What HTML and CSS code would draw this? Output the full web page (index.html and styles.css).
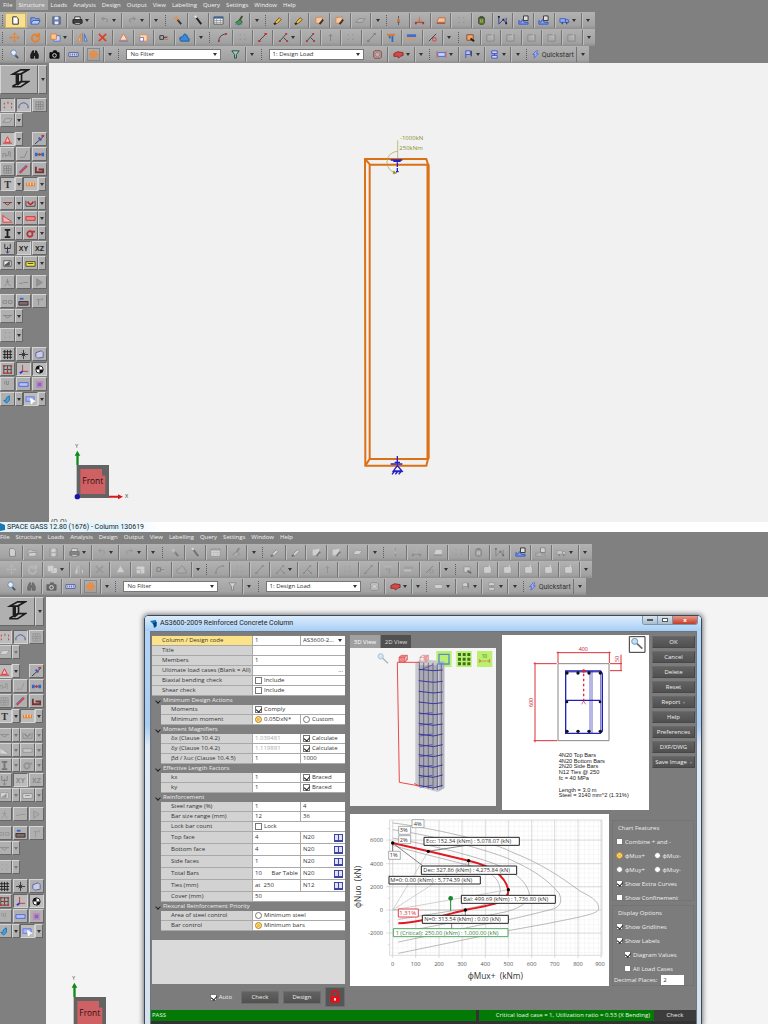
FILE: index.html
```html
<!DOCTYPE html>
<html lang="en">
<head>
<meta charset="utf-8">
<title>SPACE GASS 12.80 (1676) - Column 130619</title>
<link rel="stylesheet" href="styles.css">
</head>
<body>
<section class="app">
  <nav class="menu"><a href="#">File</a><a href="#" class="current">Structure</a><a href="#">Loads</a><a href="#">Analysis</a><a href="#">Design</a><a href="#">Output</a><a href="#">View</a><a href="#">Labelling</a><a href="#">Query</a><a href="#">Settings</a><a href="#">Window</a><a href="#">Help</a></nav>
  <div class="bars"></div>
  <div class="work">
    <aside class="side"></aside>
    <main class="canvas">
      <svg class="scene" width="719" height="459" viewBox="0 0 719 459">
        <svg x="291" y="62" width="120" height="360" viewBox="0 0 360 1080">
          <g fill="none" stroke="#dc7014">
            <path stroke-width="6" d="M75 102H259L265 121V998L259 1022H76ZM90 119H262M89 119V1002H263M75 102l15 17M76 1022l13-20"/>
            <path stroke-width="9" d="M264 118V1002"/>
          </g>
          <g fill="none" stroke="#a5a54a" stroke-width="2"><path d="M173 46V100M173 78Q141 84 141 112Q143 138 166 143"/><path d="M160 138l10 6-10 3z" fill="#7c8400"/></g>
          <g fill="none" stroke="#2321c0" stroke-width="4"><path d="M152 105H187M160 109H182M172 112V126M172 129V140M168 140h8M172 993V1018M152 1017H187M164 1012h16M172 1022L160 1038H186ZM157 1040H188M156 1048l6-7M166 1048l6-7M176 1048l6-7"/></g>
          <text class="load" x="180" y="44">-1000kN</text>
          <text class="load" x="178" y="76">250kNm</text>
        </svg>
        <svg x="18" y="379" width="70" height="60" viewBox="201 21 210 180"><use href="#cube"/></svg>
        <text class="origin" x="2" y="461">(0,0)</text>
      </svg>
    </main>
  </div>
</section>

<section class="app modal">
  <h1 class="caption"><svg width="6" height="8" viewBox="0 0 6 8"><path fill="#1c78b0" d="M0 0l5 2v5l-5 1z"/></svg>SPACE GASS 12.80 (1676) - Column 130619</h1>
  <nav class="menu"><a href="#">File</a><a href="#">Structure</a><a href="#">Loads</a><a href="#">Analysis</a><a href="#">Design</a><a href="#">Output</a><a href="#">View</a><a href="#">Labelling</a><a href="#">Query</a><a href="#">Settings</a><a href="#">Window</a><a href="#">Help</a></nav>
  <div class="bars"></div>
  <div class="work">
    <aside class="side"></aside>
    <main class="canvas">
      <svg class="scene" width="719" height="459" viewBox="0 0 719 459">
        <defs><g id="cube">
          <path fill="#636363" d="M230 90H327V189H230Z"/><path fill="#cf6064" d="M241 102H316V177H241Z"/><path fill="#636363" d="M306 102h12v20h-12z"/>
          <path fill="#128a1a" d="M229 90V62h-5l8-15 9 15h-5V90z"/><path fill="#d81818" d="M327 182h27v-4l15 7-15 8v-5h-27z"/><circle cx="232" cy="185" r="8" fill="#1a12b4"/>
          <text x="247" y="148" font-size="25" fill="#2d1010">Front</text><text x="226" y="40" font-size="15" fill="#444">Y</text><text x="375" y="190" font-size="17" fill="#444">X</text>
        </g></defs>
        <svg x="18" y="377" width="70" height="60" viewBox="201 21 210 180"><use href="#cube"/></svg>
      </svg>
    </main>
  </div>

  <div class="dialog" role="dialog" aria-labelledby="dlg">
    <header class="title"><svg width="8" height="8" viewBox="0 0 8 8"><path fill="#1475b8" d="M0 1l6-1 1 6-3 2-1-4z"/><path fill="#0d3f66" d="M3 3l4-1-2 6z"/></svg><h2 id="dlg">AS3600-2009 Reinforced Concrete Column</h2>
      <div class="winbtns"><button aria-label="Minimize"><i class="min"></i></button><button aria-label="Maximize"><i class="max"></i></button><button class="x" aria-label="Close">x</button></div>
    </header>
    <div class="content">
      <div class="upper">
        <form class="props">
          <div class="rows">
            <div class="row top hot"><label for="code">Column / Design code</label><input id="code" value="1"><span class="pick"><select aria-label="Design code"><option>AS3600-2...</option></select></span></div>
            <div class="row top"><label for="ttl">Title</label><input id="ttl" class="wide"></div>
            <div class="row top"><label for="mem">Members</label><input id="mem" class="wide" value="1"></div>
            <div class="row top"><label for="ult">Ultimate load cases (Blank = All)</label><span class="wide right-end"><input id="ult"><button type="button" aria-label="Browse">...</button></span></div>
            <div class="row top"><b>Biaxial bending check</b><label class="wide"><input type="checkbox">Include</label></div>
            <div class="row top"><b>Shear check</b><label class="wide"><input type="checkbox">Include</label></div>
            <h3>Minimum Design Actions</h3>
            <div class="row"><b>Moments</b><label class="wide"><input type="checkbox" checked>Comply</label></div>
            <div class="row"><b>Minimum moment</b><label><input type="radio" name="mm" checked>0.05DxN*</label><label><input type="radio" name="mm">Custom</label></div>
            <h3>Moment Magnifiers</h3>
            <div class="row"><label for="dx">δx (Clause 10.4.2)</label><input id="dx" value="1.039481" class="dim"><label><input type="checkbox" checked>Calculate</label></div>
            <div class="row"><label for="dy">δy (Clause 10.4.2)</label><input id="dy" value="1.119891" class="dim"><label><input type="checkbox" checked>Calculate</label></div>
            <div class="row"><label for="bd">βd / λuc (Clause 10.4.5)</label><input id="bd" value="1"><input aria-label="λuc" value="1000"></div>
            <h3>Effective Length Factors</h3>
            <div class="row"><label for="kx">kx</label><input id="kx" value="1"><label><input type="checkbox" checked>Braced</label></div>
            <div class="row"><label for="ky">ky</label><input id="ky" value="1"><label><input type="checkbox" checked>Braced</label></div>
            <h3>Reinforcement</h3>
            <div class="row"><label for="sr">Steel range (%)</label><input id="sr" value="1"><input aria-label="Maximum steel" value="4"></div>
            <div class="row"><label for="br">Bar size range (mm)</label><input id="br" value="12"><input aria-label="Maximum bar size" value="36"></div>
            <div class="row"><b>Lock bar count</b><label class="wide"><input type="checkbox">Lock</label></div>
            <div class="row tall"><label for="tf">Top face</label><input id="tf" value="4"><span><input aria-label="Top bar" value="N20"><button type="button" class="book" aria-label="Library"></button></span></div>
            <div class="row tall"><label for="bf">Bottom face</label><input id="bf" value="4"><span><input aria-label="Bottom bar" value="N20"><button type="button" class="book" aria-label="Library"></button></span></div>
            <div class="row tall"><label for="sf">Side faces</label><input id="sf" value="1"><span><input aria-label="Side bar" value="N20"><button type="button" class="book" aria-label="Library"></button></span></div>
            <div class="row tall"><label for="tb">Total Bars</label><span><input id="tb" value="10"><button type="button">Bar Table</button></span><span><input aria-label="Bar" value="N20"><button type="button" class="book" aria-label="Library"></button></span></div>
            <div class="row tall"><label for="ti">Ties (mm)</label><input id="ti" value="at  250"><span><input aria-label="Tie bar" value="N12"><button type="button" class="book" aria-label="Library"></button></span></div>
            <div class="row"><label for="cv">Cover (mm)</label><input id="cv" class="wide" value="50"></div>
            <h3>Flexural Reinforcement Priority</h3>
            <div class="row"><b>Area of steel control</b><label class="wide"><input type="radio" name="pr">Minimum steel</label></div>
            <div class="row"><b>Bar control</b><label class="wide"><input type="radio" name="pr" checked>Minimum bars</label></div>
          </div>
          <div class="actions"><label><input type="checkbox" checked>Auto</label><button type="button">Check</button><button type="button">Design</button>
            <button type="button" class="lock" aria-label="Locked"><svg width="12" height="14" viewBox="0 0 12 14"><path fill="none" stroke="#d9151b" stroke-width="2" d="M3 7V4a3 3 0 0 1 6 0v3"/><path fill="#e01219" d="M2 6h8l1 2v3l-2 2H3l-2-2V8z"/><circle cx="6" cy="9" r="1" fill="#fff"/><path stroke="#fff" d="M6 9v2"/></svg></button></div>
        </form>

        <div class="right">
          <div class="views">
            <div class="model">
              <div class="tabs"><button class="on">3D View</button><button>2D View</button></div>
              <svg width="146" height="158" viewBox="15 114 438 474">
                <path fill="#f5f5f5" d="M15 114h438v474H15z"/>
                <g fill="#baf070"><path d="M274 123h46v48h-46zM334 123h46v48h-46zM396 123h46v48h-46z"/></g>
                <path fill="#c9c9cf" d="M211 158l20-10 67 6v380l-20 12-67-18z"/><path fill="#a2a3ae" opacity=".8" d="M222 166h56v368l-56-6z"/><path fill="#b5b5bf" d="M282 156l16-2v380l-16 10z"/>
                <path fill="none" stroke="#4a4a60" stroke-width="2" d="M223 156V530M236 158V533M250 158V536M264 158V540M277 160V540M289 158V532"/>
                <g fill="none" stroke="#3936a0" stroke-width="3"><path d="M221 178l44 4 28-2M221 212l44 5 28-3M221 244l44 5 28-3M221 276l44 5 28-3M221 309l44 5 28-3M221 340l44 6 28-4M221 372l44 6 28-6M221 404l44 6 28-6M221 434l44 6 28-6M221 466l44 6 28-7M221 496l44 6 28-7M221 526l44 8 28-8"/><path stroke-width="2" d="M224 346l38-6M224 378l38-6M224 410l38-6M224 440l38-6M224 472l38-6M224 502l38-6M224 532l38-6M226 312l36-4M226 180l38-16"/></g>
                <path fill="none" stroke="#ea4a4a" stroke-width="3" d="M222 157H157L163 517L224 528M222 528l-14-8"/>
                <circle cx="107" cy="139" r="8" fill="#cfe6f5" stroke="#a9c4d6" stroke-width="3"/><path stroke="#a9b4bd" stroke-width="4" d="M113 145l16 15"/>
                <path fill="#f08a8a" stroke="#d34b4b" stroke-width="2" d="M162 142h18v14h-18zM162 142l7-6h18l-7 6M180 156l7-6v-14"/><path fill="#fff" fill-opacity=".4" stroke="#b77" stroke-width="2" d="M225 142h18v14h-18zM225 142l7-6h18l-7 6M243 156l7-6v-14"/><path fill="#f29a9a" d="M236 138h12v14h-12z"/>
                <path fill="none" stroke="#5b8fc4" stroke-width="4" d="M282 133h30v29h-30z"/>
                <g fill="#3e6f1e"><path d="M339 129h9v9h-9zM353 129h9v9h-9zM367 129h9v9h-9zM339 143h9v9h-9zM353 143h9v9h-9zM367 143h9v9h-9zM339 157h9v9h-9zM353 157h9v9h-9zM367 157h9v9h-9z"/></g>
                <text x="410" y="145" font-size="14" fill="#456b20">10</text><path fill="none" stroke="#e0703a" stroke-width="2" d="M403 147v12M434 147v12M404 153h30M408 150l-4 3 4 3M430 150l4 3-4 3"/>
              </svg>
            </div>
            <svg class="section" width="147" height="175" viewBox="472 74 441 525">
              <path fill="#fff" d="M472 74h441v525H472z"/>
              <path fill="#fff" stroke="#333" stroke-width="3" d="M854 79h47v47h-47z"/><circle cx="870" cy="93" r="9" fill="#bfe0f5" stroke="#7596b0" stroke-width="3"/><path stroke="#59687a" stroke-width="5" d="M877 100l16 15"/>
              <path fill="none" stroke="#888" stroke-width="3" d="M640 160h153v231H640z"/>
              <path fill="none" stroke="#dc3037" stroke-width="3" d="M640 158V124M794 158V124M636 127H798M636 160H567M571 156V396M567 391H638M796 160H832M829 133V181M796 181H832"/>
              <g fill="none" stroke="#2421b6"><path stroke-width="4" d="M663 182H768L773 190V362L767 369H663ZM663 270H768"/><path stroke-width="2" d="M736 182V369M742 182V369M768 182V369M666 185H765"/></g>
              <g fill="#111"><circle cx="667" cy="188" r="5"/><circle cx="700" cy="188" r="5"/><circle cx="733" cy="188" r="5"/><circle cx="767" cy="188" r="5"/><circle cx="667" cy="275" r="4"/><circle cx="766" cy="275" r="4"/><circle cx="667" cy="363" r="5"/><circle cx="700" cy="363" r="5"/><circle cx="733" cy="363" r="5"/><circle cx="767" cy="363" r="5"/></g>
              <path fill="none" stroke="#d62b3c" stroke-width="4" stroke-dasharray="8 7" d="M717 190V270"/><circle cx="717" cy="182" r="5" fill="#e02030"/><path fill="none" stroke="#d62b3c" stroke-width="2" d="M711 282l6-10 6 10"/>
              <g fill="#c5202a" font-size="16"><text x="702" y="122">400</text><text transform="translate(565 290) rotate(-90)">600</text><text transform="translate(823 155) rotate(-90)">50</text></g>
              <g class="notes"><text x="642" y="440">4N20 Top Bars</text><text x="642" y="457">4N20 Bottom Bars</text><text x="642" y="474">2N20 Side Bars</text><text x="642" y="492">N12 Ties @ 250</text><text x="642" y="508">fc = 40 MPa</text><text x="642" y="544">Length = 3.0 m</text><text x="642" y="561">Steel = 3140 mm^2 (1.31%)</text></g>
            </svg>
            <div class="cmds"><button>OK</button><button>Cancel</button><button>Delete</button><button>Reset</button><button class="more">Report</button><button>Help</button><button>Preferences</button><button>DXF/DWG</button><button class="more">Save Image</button></div>
          </div>
          <div class="results">
            <svg class="chart" width="259" height="172" viewBox="15 10 777 516">
              <defs><pattern id="gr" x="143" y="18" width="14" height="14" patternUnits="userSpaceOnUse"><path fill="none" stroke="#ebebeb" stroke-width="2" d="M0 0H14M0 0V14"/></pattern></defs>
              <path fill="#fff" d="M15 10h777v516H15z"/><path fill="url(#gr)" stroke="#ccc" stroke-width="2" d="M134 28H771V434H134z"/>
              <path fill="none" stroke="#ccc" stroke-width="2" d="M143 28V442M212 28V442M282 28V442M351 28V442M421 28V442M490 28V442M560 28V442M629 28V442M699 28V442M768 28V442M124 88H771M124 159H771M124 228H771M124 298H771M124 367H771M128 54h6M128 124h6M128 194h6M128 263h6M128 332h6M128 402h6"/>
              <g fill="none" stroke="#999" stroke-width="2">
                <path d="M143 37C200 42 430 86 500 124C610 168 660 210 708 243C748 262 762 276 761 296C758 310 700 320 600 340L490 360L160 428"/>
                <path d="M143 57C250 72 400 110 480 140C570 178 610 210 642 248C653 270 647 290 620 296C520 322 450 336 400 344L160 394"/>
                <path d="M143 82C240 100 370 130 450 160C520 188 543 216 552 245C558 275 520 294 480 304C400 320 300 340 160 366"/>
                <path d="M143 104C230 130 330 152 400 172C456 190 467 220 465 245C458 275 400 290 350 296L160 326"/>
                <path stroke="#bbb" d="M143 298L372 150M143 298L250 122M143 298L490 237M143 298L361 298"/>
              </g>
              <path fill="none" stroke="#444" stroke-width="2" d="M143 97L233 165M250 122L370 103M371 150V165M490 237V256M361 298V315M320 340V356M143 97V122"/>
              <path fill="none" stroke="#e01a24" stroke-width="6" d="M143 97C200 110 310 136 371 150C450 168 482 204 490 237C492 280 430 284 361 298C280 318 220 336 160 338"/>
              <g><circle cx="143" cy="97" r="5"/><circle cx="250" cy="122" r="5"/><circle cx="371" cy="150" r="5"/><circle cx="490" cy="237" r="5"/><circle cx="361" cy="298" r="5"/></g>
              <path stroke="#16862a" stroke-width="3" d="M317 263V300"/><circle cx="317" cy="263" r="7" fill="#16862a"/>
              <g fill="#fff" stroke="#888" stroke-width="2"><path d="M201 27h36v24h-36zM161 47h36v24h-36zM161 75h36v24h-36zM131 122h35v24h-35z"/></g>
              <g fill="#fff" stroke="#222" stroke-width="3"><path d="M237 80h286v24H237zM229 166h286v25H229zM132 197h274v23H132zM349 254h282v24H349zM232 314h258v24H232z"/></g>
              <path fill="#fff" stroke="#e04850" stroke-width="3" d="M160 295h60v24h-60z"/><path fill="#fff" stroke="#57a362" stroke-width="3" d="M145 354h344v24H145z"/>
              <g fill="#333" font-size="17"><text x="243" y="98">Ecc: 152.34 (kNm) : 5,078.07 (kN)</text><text x="235" y="185">Dec: 327.86 (kNm) : 4,275.84 (kN)</text><text x="136" y="215">M=0: 0.00 (kNm) : 5,774.39 (kN)</text><text x="355" y="272">Bal: 499.69 (kNm) : 1,736.80 (kN)</text><text x="238" y="332">N=0: 313.54 (kNm) : 0.00 (kN)</text>
                <text x="206" y="45">4%</text><text x="164" y="65">3%</text><text x="164" y="93">2%</text><text x="134" y="140">1%</text></g>
              <text x="163" y="313" font-size="18" fill="#d83038">1.31%</text><text x="152" y="372" font-size="17" fill="#35803f">1 (Critical): 250.00 (kNm) : 1,000.00 (kN)</text>
              <g fill="#555" font-size="17" text-anchor="end"><text x="114" y="94">6000</text><text x="114" y="165">4000</text><text x="114" y="234">2000</text><text x="114" y="304">0</text><text x="114" y="373">-2000</text></g>
              <g fill="#555" font-size="17" text-anchor="middle"><text x="143" y="467">0</text><text x="212" y="467">100</text><text x="282" y="467">200</text><text x="351" y="467">300</text><text x="421" y="467">400</text><text x="490" y="467">500</text><text x="560" y="467">600</text><text x="629" y="467">700</text><text x="699" y="467">800</text><text x="765" y="467">900</text></g>
              <g fill="#333" font-size="25"><text x="368" y="505" xml:space="preserve">ϕMux+  (kNm)</text><text transform="translate(48 292) rotate(-90)" xml:space="preserve">ϕNuo  (kN)</text></g>
            </svg>
            <div class="opts">
              <fieldset><h4>Chart Features</h4>
                <label><input type="checkbox">Combine + and -</label>
                <div class="pair"><label><input type="radio" name="ax" checked>ϕMux+</label><label><input type="radio" name="ax">ϕMux-</label></div>
                <div class="pair"><label><input type="radio" name="ax">ϕMuy+</label><label><input type="radio" name="ax">ϕMuy-</label></div>
                <label><input type="checkbox" checked>Show Extra Curves</label>
                <label><input type="checkbox">Show Confinement</label></fieldset>
              <fieldset><h4>Display Options</h4>
                <label><input type="checkbox" checked>Show Gridlines</label>
                <label><input type="checkbox" checked>Show Labels</label>
                <label class="sub"><input type="checkbox" checked>Diagram Values</label>
                <label class="sub"><input type="checkbox">All Load Cases</label>
                <label class="dec">Decimal Places:<input value="2"></label></fieldset>
            </div>
          </div>
        </div>
      </div>
      <footer class="status"><span class="pass">PASS</span><span class="crit">Critical load case = 1, Utilization ratio = 0.53 (X Bending)</span><button>Check</button></footer>
    </div>
  </div>
</section>
<script src="tools.js"></script>
</body>
</html>
```

FILE: styles.css
```css
* { box-sizing: border-box; }
body { margin: 0; height: 100vh; display: flex; flex-direction: column; overflow: hidden; background: #808080; color: #333; font: 6px/8px "Open Sans", "Noto Sans", sans-serif; }
button, input, select { font: inherit; color: inherit; margin: 0; padding: 0; border: 0; background: none; border-radius: 0; min-width: 0; }
h1, h2, h3, h4 { margin: 0; font-weight: 400; font-size: 6px; }
svg { display: block; flex: none; }
text { font-family: "Open Sans", "Noto Sans", sans-serif; }

.app { position: relative; overflow: hidden; }
.app.modal { flex: 1; }
.caption { display: flex; align-items: center; gap: 1px; height: 10px; background: linear-gradient(90deg, #e2f5fd 0, #e2f5fd 120px, #fff 160px); color: #222; font: 7px/10px Roboto, sans-serif; }
.menu { display: flex; height: 12px; line-height: 12px; }
.menu a { color: #f2f2f2; text-decoration: none; padding: 0 3px; height: 10px; line-height: 11px; }
.menu a.current { background: #a0a0a0; }
.modal .menu, .modal .bars, .modal .work { margin-left: -3px; }

.bar { display: flex; align-items: center; height: 17px; width: 595px; background: linear-gradient(#b2b2b2, #a2a2a2 80%, #8f8f8f); }
.bar.short { width: 589px; }
.tool, .grip, .end, .drop, .quick { height: 15px; flex: 0 1 21px; display: flex; align-items: center; justify-content: center; border-right: 1px solid #747474; }
.tool { box-shadow: 1px 0 #bdbdbd; }
.drop { flex-basis: 28px; gap: 2px; }
.end { flex-basis: 13px; border: 0; }
.grip { flex: 0 0 5px; border: 0; }
.grip::before { content: ""; height: 11px; border-left: 1px dotted #5c5c5c; }
.caret::after, .end::after, .pick::after { content: ""; border: 2px solid transparent; border-top: 3px solid #333; border-bottom: 0; flex: none; }
.quick { flex: 0 0 48px; gap: 2px; font: 7px/8px Roboto, sans-serif; color: #333; }
.tool.active { background: #f8e08f; border: 1px solid #cfb561; }
.tool.boxed svg { outline: 1px solid #888; }
.off svg { filter: grayscale(1) brightness(.9); opacity: .4; }
.modal .tool:not(.live) svg, .modal .key.mute svg { filter: grayscale(1) brightness(1.4); opacity: .45; }
.modal .tool.active { background: none; border-color: transparent #747474 transparent transparent; }
.pick { display: flex; align-items: center; background: #fff; border: 1px solid #777; }
.bar .pick { flex: 0 0 95px; height: 11px; margin: 0 5px; padding: 0 3px; }
.pick select { appearance: none; flex: 1; height: 9px; line-height: 9px; outline: 0; }

.work { display: flex; }
.side { width: 49px; flex: none; display: flex; flex-direction: column; gap: 4px; padding-top: 2px; }
.canvas { flex: 1; min-width: 0; background: #f1f1f1; overflow: hidden; }
.modal .canvas { margin-top: 2px; background: #f4f4f4; }
.key { display: flex; align-items: center; justify-content: center; background: #b0b0b0; border: 1px solid; border-color: #d4d4d4 #666 #666 #d4d4d4; height: 14px; width: 15px; }
.key.down { background: #bcbcbc; border-color: #666 #d4d4d4 #d4d4d4 #666; }
.key.c { width: 8px; }
.big { display: flex; height: 29px; }
.big .key { width: 38px; height: 29px; }
.big .key.c { width: 9px; }
.line { display: flex; width: 47px; height: 15px; }
.line.three { justify-content: space-between; }
.gap { flex: 1; }
.key.txt { font: bold 7px "Liberation Sans", sans-serif; color: #222; }
.key.T { font: bold 10px "Liberation Serif", serif; color: #333; }
.modal .mute { color: #888; }
.modal .mute.caret::after { border-top-color: #777; }

.load { font-size: 18px; fill: #8c8c2c; }
.origin { font-size: 8px; fill: #444; }

.dialog { position: absolute; left: 144px; top: 93px; width: 558px; border: 1px solid #3b4a5a; border-radius: 4px 4px 0 0; box-shadow: 0 0 5px 1px #777; background: linear-gradient(#b5d5f5 0, #a9cdf2 110px, #dfeaf5 130px, #d5e2ee); padding: 0 4px 0 5px; }
.title { display: flex; align-items: center; gap: 2px; height: 15px; margin: 0 -4px 0 -5px; padding-left: 5px; background: linear-gradient(#dcedfc, #a8cef5); border-radius: 3px 3px 0 0; }
.title h2 { flex: 1; font: 7px/9px Roboto, sans-serif; color: #222; }
.winbtns { display: flex; align-self: flex-start; height: 9px; margin-right: 3px; border: 1px solid #7c94ac; border-top: 0; border-radius: 0 0 3px 3px; overflow: hidden; }
.winbtns button { width: 15px; display: flex; align-items: center; justify-content: center; background: linear-gradient(#d8e5f1, #aabccd); border-right: 1px solid #7c94ac; }
.winbtns .x { width: 24px; background: linear-gradient(#e59a8c, #c73b28); color: #fff; font-weight: 700; border: 0; }
.min, .max { width: 6px; height: 2px; border: 1px solid #555; background: #fff; }
.max { height: 4px; }

.content { background: #7c7c7c; padding-top: 3px; border: 1px solid #6a7684; border-bottom: 0; }
.upper { display: flex; gap: 5px; }
.props { width: 194px; flex: none; padding-left: 1px; }
.rows { background: #808080; border-bottom: 44px solid #dadada; padding: 1px 0 9px; }
.row { display: grid; grid-template-columns: 91px 47px 1fr; height: 10px; margin-left: 9px; gap: 1px; background: #a9a9a9; border-bottom: 1px solid #a9a9a9; line-height: 9px; }
.row.top { grid-template-columns: 100px 47px 1fr; margin-left: 0; }
.row.tall { height: 12px; line-height: 11px; }
.row > * { background: #fff; padding-left: 2px; display: flex; align-items: center; width: 100%; min-width: 0; white-space: nowrap; }
.row > :first-child { background: #d2d2d2; padding-left: 10px; font-weight: 400; }
.row.hot > :first-child { background: #fce38a; }
.row .wide { grid-column: span 2; }
.row span input { flex: 1; width: 10px; }
.row .pick { border: 0; padding-right: 3px; }
.row span button { padding-right: 2px; }
.dim { color: #aaa; }
h3 { color: #ececec; height: 9px; line-height: 9px; padding-left: 11px; position: relative; }
h3::before { content: ""; position: absolute; left: 4px; top: 3px; width: 3px; height: 3px; border: solid #222; border-width: 0 1px 1px 0; transform: rotate(45deg); }
label { display: flex; align-items: center; }
input[type=checkbox], input[type=radio] { appearance: none; flex: none; width: 7px; height: 7px; border: 1px solid #777; background: #fff; margin-right: 2px; position: relative; }
input[type=radio] { border-radius: 50%; }
input[type=checkbox]:checked::after { content: ""; position: absolute; left: 1px; top: 0; width: 3px; height: 4px; border: solid #222; border-width: 0 1px 1px 0; transform: rotate(40deg); }
input[type=radio]:checked { background: #f3b836; border-color: #b98a2c; box-shadow: inset 0 0 0 1px #fae2a0; }
.row .book { width: 9px; height: 8px; padding: 0; border: 1px solid #3c46a0; border-bottom-width: 2px; background: linear-gradient(90deg, #dfe3ff 3px, #3c46a0 3px, #3c46a0 4px, #dfe3ff 4px); margin-right: 2px; }
.actions { display: flex; align-items: center; justify-content: flex-end; gap: 4px; height: 26px; color: #eee; }
.actions label { margin-right: 5px; }
.actions button, .cmds button, .status button { background: linear-gradient(#626262, #505050); border: 1px solid #6d6d6d; color: #eee; height: 13px; width: 38px; }
.actions .lock { width: 20px; height: 20px; display: flex; align-items: center; justify-content: center; background: #555; }

.right { flex: 1; min-width: 0; display: flex; flex-direction: column; gap: 4px; }
.views { display: flex; }
.model { margin-right: 6px; }
.tabs { display: flex; gap: 1px; height: 13px; align-items: stretch; }
.tabs button { width: 30px; background: #505050; color: #ddd; }
.tabs .on { background: #a0a0a0; color: #fff; }
.notes text { font-family: "Liberation Sans", sans-serif; font-size: 17px; fill: #222; }
.cmds { flex: 1; display: flex; flex-direction: column; gap: 3px; padding: 1px 1px 0 3px; }
.cmds button { width: 100%; height: 12px; line-height: 10px; border-color: #6a6a6a #484848 #484848 #6a6a6a; padding: 0; white-space: nowrap; }
.cmds .more::after { content: ""; display: inline-block; margin-left: 3px; border: 1px solid transparent; border-top: 2px solid #999; border-bottom: 0; }
.results { display: flex; gap: 3px; }
.opts { flex: 1; color: #eee; display: flex; flex-direction: column; gap: 4px; padding: 6px 2px 0 0; }
fieldset { margin: 0; min-width: 0; border: 1px solid #747474; padding: 3px 2px 0 3px; height: 81px; display: flex; flex-direction: column; gap: 5px; }
fieldset h4 { padding-left: 2px; line-height: 8px; }
fieldset label { height: 9px; white-space: nowrap; }
.pair { display: flex; }
.pair label { width: 50%; }
.sub { margin-left: 8px; }
.dec { margin-top: -3px; margin-left: -2px; }
.dec input { width: 23px; height: 10px; background: #fff; color: #333; margin-left: 4px; padding-left: 2px; }
.status { display: flex; height: 14px; background: #333; color: #e6f5e6; line-height: 11px; padding-bottom: 3px; }
.pass, .crit { background: #047a06; padding-left: 1px; width: 325px; }
.crit { flex: 1; width: auto; margin-left: 3px; text-align: right; padding-right: 4px; }
.status button { background: #3c3c3c; border: 0; height: 11px; width: 42px; }
```

FILE: tools.js
```js
const p = (d, stroke, fill = 'none', w = 1) => `<path d="${d}" stroke="${stroke}" fill="${fill}" stroke-width="${w}"/>`;
const icons = {
  page: p('M3 2h4l2 2v6H3z', '#222', '#fff'),
  open: p('M1 9V3h4l1 1h4v2', '#3b5db5', '#88a5e6') + p('M1 10l2-4h8l-2 4z', '#3b5db5', '#b6ccf7'),
  save: p('M2 2h8v8H2z', '#4a5a80', '#6c7fae') + p('M4 2h4v3H4zM4 7h4v3H4z', 'none', '#e8ecf5'),
  print: p('M3 5V2h6v3', '#333', '#eee') + p('M1 5h10v4H1z', '#222', '#444') + p('M3 8h6v2H3z', '#222', '#eee'),
  undo: p('M3 4h5q3 1 0 4M5 2L3 4l2 2', '#555'), redo: p('M9 4H4q-3 1 0 4M7 2l2 2-2 2', '#555'),
  wand: p('M6 5l4 5', '#333', 'none', 2) + p('M2 4h5M5 1v5M3 2l4 4', '#f08a3c'),
  stick: p('M3 2l6 8', '#222', 'none', 2) + p('M2 1l2 2', '#eee', 'none', 2),
  table: p('M1 2h10v8H1z', '#555', '#fff') + p('M1 3h10', '#2c65a8', 'none', 2) + p('M1 6h10M1 8h10M4 3v7M8 3v7', '#999'),
  brush: p('M9 1L6 6', '#444', 'none', 2) + p('M2 8l5-3 2 3-4 3z', '#275c22', '#4f9c3c') + p('M1 10h8', '#3b84c9'),
  pencil: p('M8 3l2 2-4 4-3 1 1-3z', '#6b4a12', '#f2c14b') + p('M2 10l2-1', '#222', 'none', 2),
  plate: p('M2 3l7-1v7H2z', '#c58a5c', '#f9c79b') + p('M6 10l4-5', '#333', 'none', 2),
  sheet: p('M1 8l3-4h7L8 8z', '#666', '#ddd'),
  node: p('M6 1v3M6 8v3', '#555') + p('M5 5h2v2H5z', '#d86f2c', '#e0873c') + p('M5 8h2', '#3052a5'),
  member: p('M1 8h10', '#a33') + p('M6 2v5M4 5l2 2 2-2', '#e0702c') + p('M1 9h2M9 9h2', '#a33', 'none', 2),
  patch: p('M2 8l2-5h7v5z', '#b5734b', '#f6bf94') + p('M2 9h9', '#a33'),
  bin: p('M3 3h6v6l-1 1H4L3 9z', '#333', '#6d8a33') + p('M4 2h4', '#222') + p('M5 5v3M7 5v3', '#9cb84c'),
  graph: p('M2 2v8l5-5 3 4V3', '#2f3fa8') + p('M1 2h2M9 9h2M6 5h2', '#222', 'none', 2),
  chart: p('M1 10V6l2 2 2-3 2 3h4v2z', '#3455c4', '#7f9bea') + p('M6 1h5v5H6z', '#333', '#ddd'),
  truck: p('M1 4h6v4H1zM7 5h3l1 3H7z', '#3d5ec9', '#91aaf0') + p('M3 9h1M8 9h1', '#223', 'none', 2),
  move: p('M6 1v10M1 6h10M4 3l2-2 2 2M4 9l2 2 2-2M3 4L1 6l2 2M9 4l2 2-2 2', '#e8802c'),
  rotate: p('M9 4a4 4 0 1 0 1 3M10 1v4H6', '#e8802c', 'none', 2),
  copy: p('M4 4h7v6H4z', '#5773c4', '#cdd8f7') + p('M1 2h6v6H1z', '#d9803c', '#f8c79c'),
  mirror: p('M1 10l3-8v8z', '#e0863c', '#f6b888') + p('M11 10L8 2v8z', '#4b6ec0', '#b2c6f4') + p('M6 1v10', '#888'),
  cross: p('M2 2l8 8M10 2l-8 8', '#d9452e', 'none', 2),
  tri: p('M2 9l4-7 4 7z', '#e07b4b', '#fadfce') + p('M1 10h10', '#6a78c4'),
  scale: p('M2 3h8v7H2z', '#e08a54', '#fbd7b8') + p('M2 6h4v4H2z', '#7a7ab8', '#fff'),
  link: p('M2 4h4v4H2z', '#333') + p('M7 5h4M7 8h4', '#d8703c') + p('M6 6h4', '#224c9c'),
  cloud: p('M1 9V6l3-1 2-3 3 2v2l2 1v3H2z', '#1c56a0', '#3b8ad8'),
  arc: p('M2 10Q2 3 10 2', '#444') + p('M1 10h2M9 2h2', '#b33', 'none', 2),
  dots: p('M3 3h1M8 8h1M8 3h1M3 8h1', '#555'),
  line: p('M2 10L10 2', '#444') + p('M1 10h3M8 2h3', '#c33', 'none', 2),
  split: p('M2 10L9 2M6 6l4 4', '#444') + p('M1 10h2M8 2h2M9 10h2', '#b33', 'none', 2),
  pin: p('M6 2v8M4 4h4', '#555'),
  tee: p('M1 3h9', '#e0782c', 'none', 2) + p('M7 4v7M4 4v3', '#2b6cc0', 'none', 2),
  beam: p('M1 4h10', '#3c6fd0', 'none', 3) + p('M1 7h8', '#e8924c', 'none', 2),
  nobar: p('M2 10L10 2', '#444') + p('M6 8a2 2 0 1 0 4 0a2 2 0 1 0-4 0', '#d33'),
  loadbox: p('M2 3h7v6H2z', '#884b2b', '#f0a868') + p('M6 7l4 3', '#222', 'none', 2),
  box: p('M2 3h8v7H2z', '#666', '#ccc') + p('M5 5h3v3M8 1v4', '#eee'),
  lens: p('M2 4a3 3 0 1 0 6 0a3 3 0 1 0-6 0', '#6a87a8', '#e1f0fa') + p('M7 7l3 3', '#456', 'none', 2),
  binoc: p('M2 10V6l2-4h1v3h2V2h1l2 4v4H7V7H5v3z', '#111', '#222'),
  camera: p('M1 4h3l1-2h3l1 2h2v6H1z', '#111', '#111') + p('M4 7a2 2 0 1 0 4 0a2 2 0 1 0-4 0', '#ddd'),
  ruler: p('M1 4h10v4H1z', '#4656a0', '#eef') + p('M3 5v2M5 5v2M7 5v2M9 5v2', '#4656a0'),
  target: p('M6 1v10M1 6h10', '#f08a3c', 'none', 2) + p('M3 3h6v6H3z', '#f08a3c'),
  funnel: p('M2 2h8L7 6v4H5V6z', '#1f4a3c', '#9fd0c0'),
  stop: p('M2 3l1-1h6l1 1v6l-1 1H3L2 9z', '#8a2b2b', '#bbb') + p('M4 4h4v4H4z', '#a77'),
  hands: p('M1 5l4-2 6 1v3L8 8 6 10 5 8H1z', '#8e2a2a', '#d24a4a'),
  span: p('M2 4h8v4H2z', '#4a5ed0', '#cfd7ff') + p('M1 2v8M11 2v8', '#c66'),
  flag: p('M3 10V2h5v4H3', '#3f55c9', '#b9c6ff') + p('M9 2v6', '#223'),
  joint: p('M3 2h6v3H3zM3 7h6v3H3zM6 5v2', '#3c50c8', '#ccd5ff'),
  bolt: p('M7 1L2 6h3L4 11l6-6H7l2-4z', '#4c66c8', '#9db2ff'),
  ibeam: p('M6 6l9-5h9l-9 5zM6 20l9-5h9l-9 6H6zM10 7v12M12 7v11l4-3V6', '#1c1c1c', '#b9b9b9', 2),
  nodes: p('M2 4h1M6 3h1M10 4h1M2 8h1M10 8h1', '#c33', 'none', 2),
  bow: p('M1 9V6q5-6 10 0v3', '#4456a8'), grid3: p('M2 2h8v8H2zM2 5h8M2 7h8M5 2v8M7 2v8', '#555'),
  sup: p('M3 9l3-6 3 6z', '#d33', '#fbb') + p('M1 10h10', '#c33'), memb: p('M1 11L11 2', '#334') + p('M5 4l3 3', '#45c', 'none', 2) + p('M8 2h3', '#c33', 'none', 2),
  spring: p('M1 9V5h3v4M4 7h3V3h2v6', '#555'), ell: p('M2 9h5l3-7', '#555'),
  mast: p('M1 6h3M8 6h3', '#36c', 'none', 4) + p('M4 6h4', '#456') + p('M5 6h2', '#c33', 'none', 3), redline: p('M2 10L10 2', '#c44', 'none', 2) + p('M1 9l8-8', '#56c'),
  chair: p('M2 3v6h8V6H5', '#733', 'none', 2), dist: p('M1 7h10M1 5h10', '#e8822c', 'none', 2) + p('M3 4v3M6 4v3M9 4v3', '#fdc'),
  sag: p('M1 5h10M3 5q3 5 6 0', '#833'), ubend: p('M1 3v6h10V3', '#444') + p('M3 4q3 6 6 0', '#c22', 'none', 2),
  shear: p('M1 2v8h10M1 3l9 6', '#c44', '#f8b5b5'), bar2: p('M1 4h10v4H1z', '#c33', '#f28a8a'),
  isec: p('M3 2h6M3 10h6M6 2v8', '#222', 'none', 2), sigma: p('M8 5a3 3 0 1 0 0 3V4h3', '#b33', 'none', 2),
  down: p('M3 1v5h6V1M6 4v7', '#333') + p('M4 9l2 2 2-2', '#33c'), shade: p('M2 3h8v6H2z', '#555', '#eee') + p('M3 8l5-4v4z', '#555', '#555'),
  label: p('M1 4h10v5H1z', '#443', '#f5e63c') + p('M3 6h6', '#443'), man: p('M6 2v4M3 10l3-4 3 4M4 5h4', '#555'), wave: p('M1 7h3l2-1h5', '#555'), play: p('M3 2l6 4-6 4z', '#555', '#777'),
  chain: p('M1 5h4v3H1zM7 5h4v3H7z', '#555'), tank: p('M1 6h10v4H1z', '#333', '#866') + p('M2 3h4', '#36c', 'none', 2), tplus: p('M3 4h5M5 4v6M9 2v3', '#555'),
  hash: p('M1 3h10M1 6h10M1 9h10M3 1v10M6 1v10M9 1v10', '#222'), star: p('M6 1v10M1 6h10M4 4l4 4M8 4l-4 4', '#333'), cube: p('M2 4l6-2 2 2v5l-6 1-2-2z', '#5560b0', '#ccd'),
  rdots: p('M2 2h8v8H2zM6 2v8M2 6h8', '#444') + p('M1 2h2M5 6h2M9 2h2M1 10h2M9 10h2M5 10h2', '#c33', 'none', 2),
  axes: p('M5 1v7h6', '#c33') + p('M5 8l-3 2', '#33c', 'none', 2), ball: p('M2 6a4 4 0 1 0 8 0a4 4 0 1 0-8 0', '#111', '#fff') + p('M6 2a4 4 0 0 0-4 4h4zM6 10a4 4 0 0 0 4-4H6z', 'none', '#111'),
  ten: p('M3 2v4M5 2v4h2V2', '#555'), meas: p('M1 4h10v4H1z', '#4c66d0', '#b3c2ff'), glow: p('M3 3h6v6H3z', '#c68ab0', '#6a70d8', 2),
  note: p('M5 10L8 7V2L5 4 4 7 2 7z', '#1c6cb0', '#4aa2dc'), cursor: p('M1 3h9v5H1z', '#6678d8', '#aab6f5') + p('M6 5l1 6 2-3h2z', '#fff', '#fff')
};
const draw = (n, s = 12, box = 12) => `<svg width="${s}" height="${s}" viewBox="0 0 ${box} ${box}">${icons[n]}</svg>`;

/* Suffixes: + drop-down, - disabled, * usable while a dialog is open, ! highlighted, ~ boxed. */
const bars = [
  '| page! open save print+ undo+- redo+- v | wand stick table brush v | pencil pencil plate plate sheet- v | node member patch dots- bin graph chart* chart truck+ v',
  '| move rotate copy+ mirror cross tri scale link cloud v | arc dots- line split+ split pin- dots- line- tee beam nobar v | loadbox box- box- box- box- box- v',
  '| lens* binoc camera ruler* target*~ v | =No_Filter funnel v | =1:_Design_Load stop hands+* v | span+ flag+ joint+ v | quick v'
];
const tool = t => {
  if (t === '|') return '<span class="grip"></span>';
  if (t === 'v') return '<button class="end" aria-label="More"></button>';
  if (t === 'quick') return `<button class="quick">${draw('bolt', 9)}Quickstart</button>`;
  if (t[0] === '=') { const s = t.slice(1).replace(/_/g, ' '); return `<span class="pick"><select aria-label="${s}"><option>${s}</option></select></span>`; }
  const n = t.match(/^\w+/)[0], f = t.slice(n.length);
  const c = [['+', 'drop caret'], ['-', 'off'], ['*', 'live'], ['!', 'active'], ['~', 'boxed']].filter(x => f.includes(x[0])).map(x => x[1]).join(' ');
  return `<button class="tool ${c}" aria-label="${n}">${draw(n, 11)}</button>`;
};
document.querySelectorAll('.bars').forEach(b => {
  b.innerHTML = bars.map((r, i) => `<div class="bar${i === 2 ? ' short' : ''}">${r.split(' ').map(tool).join('')}</div>`).join('');
});

/* v is a drop arrow; - disabled, ! pressed, ? disabled only while a dialog is open, _ empty slot. */
const groups = [
  ['nodes! bow! grid3-', 'sheet- v-'],
  ['sup! v _ memb', 'spring- ell- mast', 'grid3- redline chair', 'T! v dist! v'],
  ['sag? v? ubend? v?', 'shear? v? bar2? v?', 'isec? v? sigma? v?', 'down? XY!? XZ?', 'shade? v? label? v?'],
  ['man- wave- play-'],
  ['chain- tank tplus-', 'sag- v-'],
  ['dots- v-'],
  ['hash star cube', 'rdots axes! ball!', 'ten- meas glow', 'note v cursor! v']
];
const key = k => {
  const n = k.match(/^[a-zA-Z0-9]+|_/)[0], c = (k.includes('-') ? ' off mute' : '') + (k.includes('?') ? ' mute' : '') + (k.includes('!') ? ' down' : '');
  if (n === '_') return '<span class="gap"></span>';
  if (n === 'v') return `<button class="key c caret${c}" aria-label="Options"></button>`;
  if (n === 'T') return `<button class="key T${c}">T</button>`;
  if (n[0] === 'X') return `<button class="key txt${c}">${n}</button>`;
  return `<button class="key${c}" aria-label="${n}">${draw(n, 11)}</button>`;
};
document.querySelectorAll('.side').forEach(s => {
  s.innerHTML = `<div class="big"><button class="key" aria-label="Section">${draw('ibeam', 22, 26)}</button><button class="key c caret" aria-label="Options"></button></div>` +
    groups.map(g => `<div>${g.map(l => `<div class="line${l.includes('v') && !l.includes('wave') ? '' : ' three'}">${l.split(' ').map(key).join('')}</div>`).join('')}</div>`).join('');
});
```
